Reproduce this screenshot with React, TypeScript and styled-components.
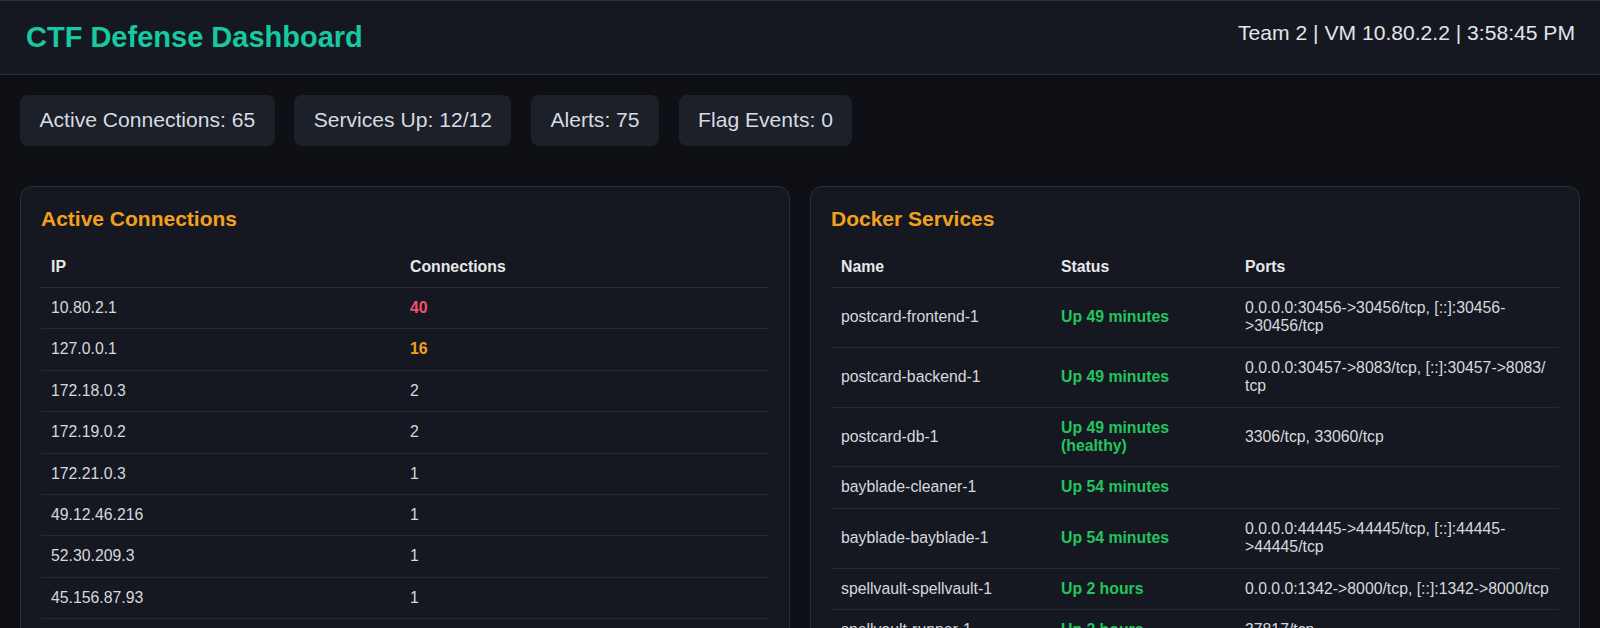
import React from "react";
import styled, { createGlobalStyle } from "styled-components";

const GlobalStyle = createGlobalStyle`
  html, body {
    margin: 0;
    padding: 0;
    background: #0e1015;
    font-family: "Liberation Sans", Arial, sans-serif;
    color: #d5d8de;
  }
  * { box-sizing: border-box; }
`;

const Header = styled.header`
  display: flex;
  justify-content: space-between;
  align-items: flex-start;
  padding: 20px 25px 20px 26px;
  background: #151820;
  border-top: 1px solid #2c3038;
  border-bottom: 1px solid #2c3038;
`;

const Title = styled.h1`
  margin: 0;
  font-size: 29px;
  line-height: 33px;
  font-weight: 700;
  color: #16c9a0;
`;

const HeaderInfo = styled.div`
  font-size: 21.1px;
  line-height: 24px;
  color: #e2e4e8;
`;

const Main = styled.main`
  padding: 20px;
`;

const StatsRow = styled.div`
  display: flex;
  gap: 19.5px;
  margin-bottom: 40px;
`;

const StatCard = styled.div`
  background: #1c2029;
  border-radius: 8px;
  padding: 13px 19.5px;
  font-size: 21.1px;
  line-height: 24.5px;
  color: #d8dbe1;
`;

const Grid = styled.div`
  display: grid;
  grid-template-columns: 1fr 1fr;
  gap: 20px;
`;

const Panel = styled.section`
  background: #151820;
  border: 1px solid #2a2e37;
  border-radius: 12px;
  padding: 20px;
`;

const PanelTitle = styled.h2`
  margin: 0 0 16px 0;
  font-size: 21px;
  line-height: 24px;
  font-weight: 700;
  color: #f2a01e;
`;

const Table = styled.table`
  width: 100%;
  border-collapse: collapse;
  table-layout: fixed;
  font-size: 15.8px;
`;

const Th = styled.th`
  text-align: left;
  font-weight: 700;
  color: #e6e8ec;
  padding: 11px 10px;
  line-height: 18.4px;
  border-bottom: 1px solid #2a2e37;
  &:last-child { padding-right: 0; }
`;

const Td = styled.td<{ $tone?: "red" | "orange" | "green" }>`
  padding: 11px 10px;
  line-height: 18.4px;
  border-bottom: 1px solid #262a33;
  vertical-align: middle;
  color: ${(p) =>
    p.$tone === "red"
      ? "#f0506e"
      : p.$tone === "orange"
      ? "#f2a01e"
      : p.$tone === "green"
      ? "#22c55e"
      : "#d5d8de"};
  font-weight: ${(p) => (p.$tone ? 700 : 400)};
  &:last-child { padding-right: 0; }
`;

const connections: [string, number][] = [
  ["10.80.2.1", 40],
  ["127.0.0.1", 16],
  ["172.18.0.3", 2],
  ["172.19.0.2", 2],
  ["172.21.0.3", 1],
  ["49.12.46.216", 1],
  ["52.30.209.3", 1],
  ["45.156.87.93", 1],
];

const services: [string, string, string][] = [
  ["postcard-frontend-1", "Up 49 minutes", "0.0.0.0:30456->30456/tcp, [::]:30456->30456/tcp"],
  ["postcard-backend-1", "Up 49 minutes", "0.0.0.0:30457->8083/tcp, [::]:30457->8083/tcp"],
  ["postcard-db-1", "Up 49 minutes (healthy)", "3306/tcp, 33060/tcp"],
  ["bayblade-cleaner-1", "Up 54 minutes", ""],
  ["bayblade-bayblade-1", "Up 54 minutes", "0.0.0.0:44445->44445/tcp, [::]:44445->44445/tcp"],
  ["spellvault-spellvault-1", "Up 2 hours", "0.0.0.0:1342->8000/tcp, [::]:1342->8000/tcp"],
  ["spellvault-runner-1", "Up 2 hours", "37817/tcp"],
];

const toneFor = (n: number): "red" | "orange" | undefined =>
  n >= 30 ? "red" : n >= 10 ? "orange" : undefined;

// allow a line break after each slash, as the reference wraps "8083/" | "tcp"
const Ports = ({ text }: { text: string }) => {
  const parts = text.split("/");
  return (
    <>
      {parts.map((p, i) => (
        <React.Fragment key={i}>
          {p}
          {i < parts.length - 1 && (
            <>
              /<wbr />
            </>
          )}
        </React.Fragment>
      ))}
    </>
  );
};

export default function App() {
  return (
    <>
      <GlobalStyle />
      <Header>
        <Title>CTF Defense Dashboard</Title>
        <HeaderInfo>Team 2 | VM 10.80.2.2 | 3:58:45 PM</HeaderInfo>
      </Header>
      <Main>
        <StatsRow>
          <StatCard>Active Connections: 65</StatCard>
          <StatCard>Services Up: 12/12</StatCard>
          <StatCard>Alerts: 75</StatCard>
          <StatCard>Flag Events: 0</StatCard>
        </StatsRow>
        <Grid>
          <Panel>
            <PanelTitle>Active Connections</PanelTitle>
            <Table>
              <colgroup>
                <col style={{ width: 359 }} />
                <col />
              </colgroup>
              <thead>
                <tr>
                  <Th>IP</Th>
                  <Th>Connections</Th>
                </tr>
              </thead>
              <tbody>
                {connections.map(([ip, n]) => (
                  <tr key={ip}>
                    <Td>{ip}</Td>
                    <Td $tone={toneFor(n)}>{n}</Td>
                  </tr>
                ))}
              </tbody>
            </Table>
          </Panel>
          <Panel>
            <PanelTitle>Docker Services</PanelTitle>
            <Table>
              <colgroup>
                <col style={{ width: 220 }} />
                <col style={{ width: 184 }} />
                <col />
              </colgroup>
              <thead>
                <tr>
                  <Th>Name</Th>
                  <Th>Status</Th>
                  <Th>Ports</Th>
                </tr>
              </thead>
              <tbody>
                {services.map(([name, status, ports]) => (
                  <tr key={name}>
                    <Td>{name}</Td>
                    <Td $tone="green">{status}</Td>
                    <Td>
                      <Ports text={ports} />
                    </Td>
                  </tr>
                ))}
              </tbody>
            </Table>
          </Panel>
        </Grid>
      </Main>
    </>
  );
}
